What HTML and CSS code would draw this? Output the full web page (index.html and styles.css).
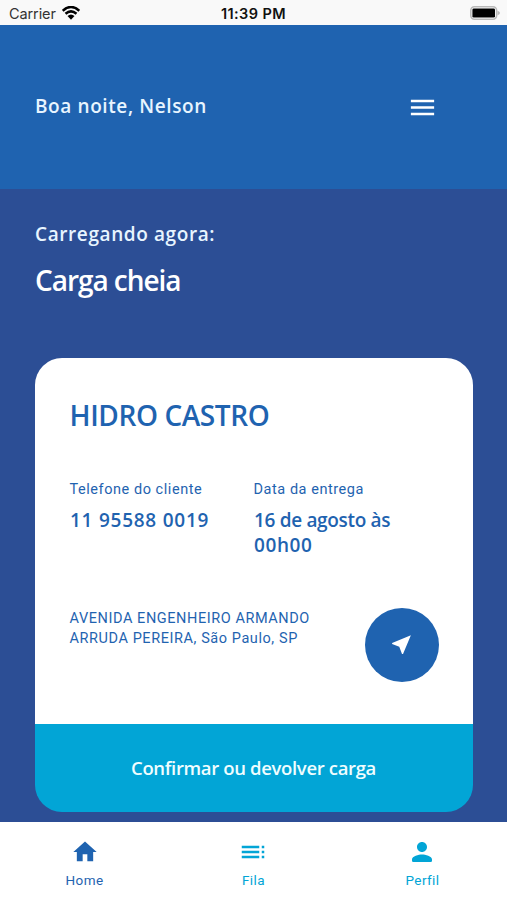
FILE: index.html
```html
<!DOCTYPE html>
<html lang="pt-BR">
<head>
<meta charset="utf-8">
<meta name="viewport" content="width=device-width, initial-scale=1">
<title>Carga</title>
<link rel="stylesheet" href="styles.css">
</head>
<body>
<div class="app">
  <div class="status">
    <div class="carrier"><span>Carrier</span>
      <svg class="wifi" viewBox="0 0 18 14"><path d="M0.7 4.7Q9-2.7 17.3 4.7M3.5 7.7Q9 3.1 14.5 7.7" fill="none" stroke="#000" stroke-width="2.5"/><path d="M5.5 10Q9 7 12.5 10L9 13.8Z"/></svg>
    </div>
    <div class="clock">11:39 PM</div>
    <svg class="battery" viewBox="0 0 30 15"><rect x=".8" y=".8" width="25.8" height="12.4" rx="3.6" fill="#fff" stroke="#b9b9b9" stroke-width="1.6"/><rect x="2.4" y="2.4" width="22.600" height="9.200" rx="1.4"/><path d="M27.5 4.8Q30 5.5 30 7Q30 8.500 27.500 9.200Z" fill="#b9b9b9"/></svg>
  </div>
  <header class="header">
    <div class="greeting">Boa noite, Nelson</div>
    <svg class="menu" viewBox="0 0 24 24"><path d="M3 18h18v-2H3v2zm0-5h18v-2H3v2zm0-7v2h18V6H3z"/></svg>
  </header>
  <main class="main">
    <div class="loading">Carregando agora:</div>
    <h1 class="load">Carga cheia</h1>
    <section class="card">
      <div class="body">
        <h2 class="client">HIDRO CASTRO</h2>
        <div class="fields">
          <div><div class="label">Telefone do cliente</div><div class="value phone">11 95588 0019</div></div>
          <div><div class="label">Data da entrega</div><div class="value"><div>16 de agosto às</div><div class="hour">00h00</div></div></div>
        </div>
        <div class="place">
          <div class="address"><div>AVENIDA ENGENHEIRO ARMANDO</div><div>ARRUDA PEREIRA, São Paulo, SP</div></div>
          <div class="go"><svg viewBox="0 0 24 24"><path d="M21 3L3 10.530v.98l6.840 2.650L12.480 21h.98L21 3z"/></svg></div>
        </div>
      </div>
      <div class="confirm"><span>Confirmar ou devolver carga</span></div>
    </section>
  </main>
  <nav class="tabs">
    <div class="tab active"><svg viewBox="0 0 24 24"><path d="M10 20v-6h4v6h5v-8h3L12 3 2 12h3v8z"/></svg><span>Home</span></div>
    <div class="tab"><svg viewBox="0 0 24 24"><path d="M3 9h14V7H3v2zm0 4h14v-2H3v2zm0 4h14v-2H3v2zm16 0h2v-2h-2v2zm0-10v2h2V7h-2zm0 6h2v-2h-2v2z"/></svg><span>Fila</span></div>
    <div class="tab"><svg viewBox="0 0 24 24"><path d="M12 12c2.210 0 4-1.790 4-4s-1.790-4-4-4-4 1.790-4 4 1.790 4 4 4zm0 2c-2.670 0-8 1.340-8 4v1q0 1 1 1h14q1 0 1-1v-1c0-2.660-5.330-4-8-4z"/></svg><span>Perfil</span></div>
  </nav>
</div>
</body>
</html>
```
FILE: styles.css
```css
* { box-sizing: border-box; margin: 0; padding: 0; }
body { background: #fff; font-family: "Open Sans", sans-serif; }
svg { display: block; flex: none; }
.app { width: 507px; height: 900px; display: flex; flex-direction: column; overflow: hidden; white-space: nowrap; }
.status { height: 25px; flex: none; background: #f9f9f9; color: #111; font: 14.500px/26px Inter, sans-serif; display: grid; grid-template-columns: 1fr auto 1fr; padding: 0 7px 0 9px; }
.carrier { display: flex; align-items: center; gap: 6px; height: 26px; color: #333; letter-spacing: -.1px; }
.carrier span { padding-top: 1px; }
.wifi { width: 18px; height: 14px; }
.clock { font-weight: 600; padding: 1px 0 0 0; letter-spacing: .4px; margin-left: -2px; }
.battery { width: 30px; height: 15px; justify-self: end; margin-top: 6px; }
.header { height: 164px; flex: none; background: #1f63b0; display: flex; justify-content: space-between; align-items: center; padding: 0 69px 0 35px; }
.greeting, .loading { color: #e8f5ff; font-size: 19px; font-weight: 600; line-height: 26px; letter-spacing: .600px; }
.greeting { margin-top: -2px; }
.menu { width: 31px; height: 31px; fill: #fff; }
.main { flex: 1; background: #2c4e95; padding: 32px 34px 0 35px; }
.load { color: #fff; font-size: 28px; font-weight: 600; line-height: 40px; letter-spacing: -1.050px; margin-top: 13px; }
.card { height: 454px; margin-top: 58px; border-radius: 27px; background: linear-gradient(#fff 366px, #02a5d6 366px); overflow: hidden; display: flex; flex-direction: column; color: #1f63b0; }
.body { height: 366px; padding: 37px 34px 0 35px; }
.client { font-size: 28px; font-weight: 600; line-height: 40px; letter-spacing: -.4px; margin-left: -.5px; }
.fields { display: grid; grid-template-columns: 184px 1fr; margin-top: 44px; }
.label, .address { font-family: Roboto, sans-serif; font-size: 14.500px; line-height: 20px; letter-spacing: .55px; margin-left: -.5px; }
.label { padding-top: 1px; }
.value { font-size: 19px; font-weight: 600; line-height: 24.500px; margin-top: 8px; letter-spacing: -.33px; }
.phone { letter-spacing: .75px; }
.hour { letter-spacing: .6px; }
.place { display: flex; justify-content: space-between; margin-top: 51px; }
.address { line-height: 19.500px; letter-spacing: .57px; margin-top: 1px; }
.go { width: 74px; height: 74px; border-radius: 50%; background: #1f63b0; display: flex; align-items: center; justify-content: center; }
.go svg { width: 25px; height: 25px; fill: #fff; margin: -1px 1px 0 0; }
.confirm { flex: 1; color: #f0fdff; display: flex; align-items: center; justify-content: center; font-size: 18.500px; font-weight: 600; letter-spacing: -.35px; padding: 0 1px 1px 0; }
.tabs { height: 78px; flex: none; background: #fff; color: #02a5d6; display: grid; grid-template-columns: repeat(3, 1fr); }
.tab { display: flex; flex-direction: column; align-items: center; padding-top: 15px; font: 13.500px/18px Roboto, sans-serif; letter-spacing: .4px; }
.tab svg { width: 30px; height: 30px; fill: currentColor; margin: 0 1px 4px 0; }
.active { color: #1f63b0; }
.active svg { width: 28px; height: 28px; margin: 1px 0 5px; }
```
